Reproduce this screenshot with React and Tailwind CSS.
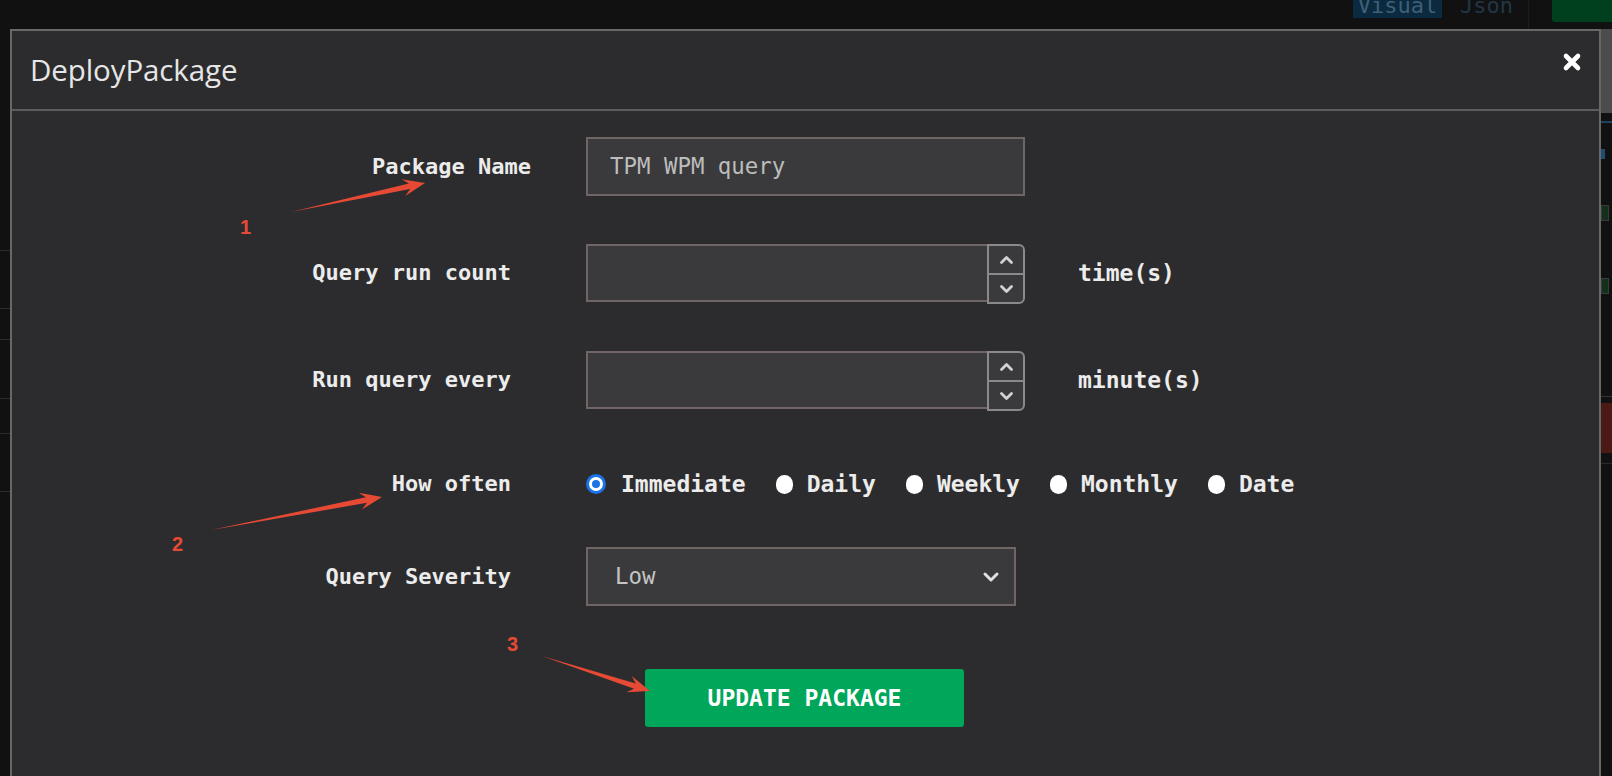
import React from 'react';

// tapered screenshot-style arrow, tail is a point and widens toward the head
const arrowPoints = (x1, y1, x2, y2) => {
    const dx = x2 - x1;
    const dy = y2 - y1;
    const len = Math.hypot(dx, dy);
    const ux = dx / len;
    const uy = dy / len;
    const nx = -uy;
    const ny = ux;
    const head = 22;
    const neckW = 2.8;
    const barbW = 8.5;
    const nkx = x2 - ux * head * 0.72;
    const nky = y2 - uy * head * 0.72;
    const bbx = x2 - ux * head;
    const bby = y2 - uy * head;
    const pts = [
        [x1, y1],
        [nkx + nx * neckW, nky + ny * neckW],
        [bbx + nx * barbW, bby + ny * barbW],
        [x2, y2],
        [bbx - nx * barbW, bby - ny * barbW],
        [nkx - nx * neckW, nky - ny * neckW],
    ];
    return pts.map(p => p.map(v => v.toFixed(1)).join(',')).join(' ');
};

const Label = ({ children, className = 'w-[499px]' }) => (
    <div className={`${className} shrink-0 text-right text-[22px] font-bold leading-none text-[#ececec] font-['DejaVu_Sans_Mono',monospace]`}>
        {children}
    </div>
);

const Spinner = () => (
    <div className="flex h-[60px] w-[38px] shrink-0 flex-col rounded-r-[6px] border-2 border-[#8a8a8a] bg-[#3a3a3c]">
        <div className="flex flex-1 items-center justify-center border-b-2 border-[#8a8a8a]">
            <svg width="15" height="10" viewBox="0 0 15 10">
                <path d="M2.5 7.5 L7.5 2.5 L12.5 7.5" stroke="#d2d2d2" strokeWidth="2.8" fill="none" strokeLinecap="round" strokeLinejoin="round" />
            </svg>
        </div>
        <div className="flex flex-1 items-center justify-center">
            <svg width="15" height="10" viewBox="0 0 15 10">
                <path d="M2.5 2.5 L7.5 7.5 L12.5 2.5" stroke="#d2d2d2" strokeWidth="2.8" fill="none" strokeLinecap="round" strokeLinejoin="round" />
            </svg>
        </div>
    </div>
);

const NumberField = ({ suffix }) => (
    <div className="flex items-center">
        <div className="flex h-[58px] w-[439px] items-start">
            <div className="h-[58px] flex-1 border-2 border-r-0 border-[#6f6565] bg-[#3a3a3c]" />
            <Spinner />
        </div>
        <span className="ml-[53px] text-[23px] font-bold text-[#ececec] font-['DejaVu_Sans_Mono',monospace]">{suffix}</span>
    </div>
);

const Radio = ({ label, checked }) => (
    <div className="flex items-center">
        {checked ? (
            <span className="flex h-[20px] w-[20px] items-center justify-center rounded-full border-[3px] border-[#1a73e8] bg-white">
                <span className="h-[8px] w-[8px] rounded-full bg-[#1a73e8]" />
            </span>
        ) : (
            <span className="h-[19px] w-[17px] rounded-full bg-white" />
        )}
        <span className={`${checked ? 'ml-[15px]' : 'ml-[14px]'} text-[23px] font-bold leading-none text-[#ececec] font-['DejaVu_Sans_Mono',monospace]`}>
            {label}
        </span>
    </div>
);

const annotations = [
    { n: '1', tail: [291, 212], tip: [425, 183], at: 'left-[240px] top-[217px]' },
    { n: '2', tail: [211, 530], tip: [382, 497], at: 'left-[172px] top-[534px]' },
    { n: '3', tail: [542, 656], tip: [650, 691], at: 'left-[507px] top-[634px]' },
];

const App = () => {
    const leftLines = [250, 308, 339, 398, 433, 491];

    return (
        <div className="relative h-[776px] w-[1612px] overflow-hidden bg-[#111111]">
            {/* page behind the dialog */}
            <div className="flex h-[29px] items-start">
                <div className="flex-1" />
                <div className="h-[18px] w-[89px] overflow-hidden bg-[#0b2a3f] text-center text-[22px] leading-[12px] text-[#3e6077] font-['DejaVu_Sans_Mono',monospace]">
                    Visual
                </div>
                <div className="ml-[18px] h-[18px] w-[60px] overflow-hidden text-[22px] leading-[12px] text-[#213646] font-['DejaVu_Sans_Mono',monospace]">
                    Json
                </div>
                <div className="ml-[8px] h-[29px] w-px bg-[#1c1c1c]" />
                <div className="ml-[23px] h-[22px] w-[60px] rounded-bl-[3px] bg-[#00401f]" />
            </div>
            <div className="flex h-[747px]">
                <div className="relative w-[10px]">
                    {leftLines.map(y => (
                        <div key={y} className="absolute left-0 h-px w-[10px] bg-[#2c2c2c]" style={{ top: y - 29 }} />
                    ))}
                </div>
                <div className="flex-1" />
                <div className="flex w-[11px] flex-col">
                    <div className="h-[84px] bg-[#4c4c4c]" />
                    <div className="mt-[8px] h-[2px] bg-[#1d4560]" />
                    <div className="mt-[26px] h-[10px] w-[4px] bg-[#1f4e6e]" />
                    <div className="mt-[46px] h-[16px] w-[8px] border border-[#3a3a3a] bg-[#13301c]" />
                    <div className="mt-[57px] h-[16px] w-[8px] border border-[#3a3a3a] bg-[#13301c]" />
                    <div className="mt-[102px] h-px bg-[#333333]" />
                    <div className="mt-[6px] h-[50px] bg-[#4b1a16]" />
                    <div className="mt-[10px] h-px bg-[#2a2a2a]" />
                </div>
            </div>

            {/* dialog */}
            <div className="absolute left-[10px] top-[29px] flex h-[770px] w-[1591px] flex-col border-2 border-[#686868] bg-[#2c2c2e]">
                <div className="flex h-[80px] shrink-0 items-center border-b-2 border-[#5c5c5c] pl-[18px] pr-[17px]">
                    <h4 className="text-[29.5px] leading-none tracking-[-0.1px] text-[#e6e6e6] font-['Open_Sans',sans-serif]">DeployPackage</h4>
                    <button className="ml-auto mb-[16px] text-white">
                        <svg width="20" height="20" viewBox="0 0 20 20">
                            <path d="M4 4 L16 16 M16 4 L4 16" stroke="#ffffff" strokeWidth="4.6" strokeLinecap="round" />
                        </svg>
                    </button>
                </div>

                <div className="flex flex-col pt-[26px]">
                    <div className="flex items-center">
                        <Label className="w-[519px]">Package Name</Label>
                        <div className="ml-[55px] flex h-[59px] w-[439px] items-center border-2 border-[#6f6565] bg-[#3a3a3c] pl-[22px] text-[22.4px] text-[#bdbdbd] font-['DejaVu_Sans_Mono',monospace]">
                            TPM WPM query
                        </div>
                    </div>

                    <div className="mt-[48px] flex items-center">
                        <Label>Query run count</Label>
                        <div className="ml-[75px]">
                            <NumberField suffix="time(s)" />
                        </div>
                    </div>

                    <div className="mt-[49px] flex items-center">
                        <Label>Run query every</Label>
                        <div className="ml-[75px]">
                            <NumberField suffix="minute(s)" />
                        </div>
                    </div>

                    <div className="mt-[64px] flex h-[22px] items-center">
                        <Label>How often</Label>
                        <div className="ml-[75px] flex items-center gap-[30px]">
                            <Radio label="Immediate" checked />
                            <Radio label="Daily" />
                            <Radio label="Weekly" />
                            <Radio label="Monthly" />
                            <Radio label="Date" />
                        </div>
                    </div>

                    <div className="mt-[52px] flex items-center">
                        <Label>Query Severity</Label>
                        <div className="ml-[75px] flex h-[59px] w-[430px] items-center border-2 border-[#6f6565] bg-[#3a3a3c] pl-[27px] pr-[14px]">
                            <span className="text-[22.4px] text-[#c4c4c4] font-['DejaVu_Sans_Mono',monospace]">Low</span>
                            <svg className="ml-auto" width="18" height="12" viewBox="0 0 18 12">
                                <path d="M3 3 L9 9 L15 3" stroke="#e0e0e0" strokeWidth="3" fill="none" strokeLinecap="round" strokeLinejoin="round" />
                            </svg>
                        </div>
                    </div>

                    <div className="mt-[63px] flex pl-[633px]">
                        <button className="flex h-[58px] w-[319px] items-center justify-center rounded-[3px] bg-[#00a65a] text-[23px] font-bold text-white font-['DejaVu_Sans_Mono',monospace]">
                            UPDATE PACKAGE
                        </button>
                    </div>
                </div>
            </div>

            {/* red screenshot annotations */}
            <svg className="pointer-events-none absolute left-0 top-0" width="1612" height="776">
                {annotations.map(a => (
                    <polygon key={a.n} points={arrowPoints(a.tail[0], a.tail[1], a.tip[0], a.tip[1])} fill="#e64a35" />
                ))}
            </svg>
            {annotations.map(a => (
                <span key={a.n} className={`absolute ${a.at} text-[20px] font-bold leading-none text-[#e64a35] font-['Liberation_Sans',sans-serif]`}>
                    {a.n}
                </span>
            ))}
        </div>
    );
};

export default App;
